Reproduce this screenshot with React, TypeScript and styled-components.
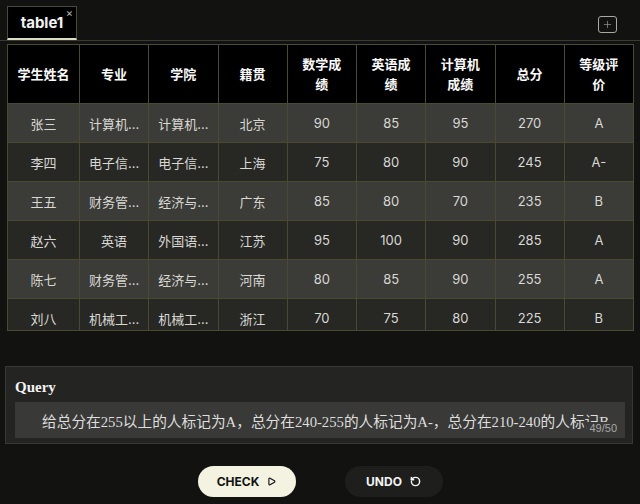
import React from 'react';
import styled, { createGlobalStyle } from 'styled-components';
import { Plus, Play, RotateCcw } from 'lucide-react';

const GlobalStyle = createGlobalStyle`
  body {
    margin: 0;
    background-color: #121211;
    font-family: "Inter", "Noto Sans CJK SC", sans-serif;
  }
`;

const Page = styled.div`
  width: 640px;
  height: 504px;
  display: flex;
  flex-direction: column;
  overflow: hidden;
`;

const TabBar = styled.div`
  height: 41px;
  box-sizing: border-box;
  padding: 6px 23px 0 7px;
  display: flex;
  justify-content: space-between;
  align-items: flex-start;
  border-bottom: 1px solid #3a3a34;
`;

const Tab = styled.div`
  position: relative;
  width: 70px;
  height: 34px;
  box-sizing: border-box;
  display: flex;
  align-items: center;
  justify-content: center;
  background-color: #000;
  border: 1px solid #4a4a3c;
  border-bottom: 2px solid #dedcc0;
  color: #f2f2f2;
  font-size: 15px;
  font-weight: 700;
`;

const CloseMark = styled.span`
  position: absolute;
  top: 0;
  right: 3px;
  font-size: 11px;
  line-height: 12px;
  color: #bbb;
  font-weight: 400;
`;

const AddButton = styled.div`
  margin-top: 10px;
  width: 19px;
  height: 17px;
  box-sizing: border-box;
  border: 1px solid #a8a8a8;
  border-radius: 3px;
  display: flex;
  align-items: center;
  justify-content: center;
  color: #9a9a9a;
`;

const TableWrap = styled.div`
  margin: 3px 6px 0 7px;
  height: 287px;
  box-sizing: border-box;
  overflow: hidden;
  border-bottom: 1px solid #4a4a30;
`;

const Table = styled.table`
  width: 627px;
  table-layout: fixed;
  border-collapse: collapse;
`;

const HeadCell = styled.th`
  height: 58px;
  padding: 0 9px;
  background-color: #000;
  border: 1px solid #4a4a30;
  color: #fafafa;
  font-size: 13px;
  font-weight: 700;
  line-height: 20px;
  text-align: center;
`;

const Row = styled.tr<{ $light: boolean }>`
  height: 39px;
  background-color: ${(p) => (p.$light ? '#3b3b37' : '#272724')};
`;

const Cell = styled.td`
  padding: 0 4px;
  border: 1px solid #4a4a30;
  color: #d8d8d4;
  font-size: 13px;
  text-align: center;
  white-space: nowrap;
  overflow: hidden;
`;

const QueryBox = styled.div`
  margin: 35px 7px 0 5px;
  height: 78px;
  box-sizing: border-box;
  padding: 10px 0 0 9px;
  background-color: #242423;
  border: 1px solid #383834;
`;

const QueryLabel = styled.div`
  font-family: "Liberation Serif", serif;
  font-weight: 700;
  font-size: 15px;
  line-height: 20px;
  color: #f2f2f2;
`;

const InputWrap = styled.div`
  position: relative;
  margin-top: 5px;
  width: 610px;
  height: 36px;
`;

const QueryInput = styled.input`
  width: 100%;
  height: 100%;
  box-sizing: border-box;
  padding: 0 0 0 27px;
  border: none;
  outline: none;
  background-color: #393937;
  color: #dedede;
  font-family: "Liberation Serif", "Noto Sans CJK SC", serif;
  font-size: 14.7px;
`;

const Counter = styled.span`
  position: absolute;
  right: 6px;
  bottom: 3px;
  padding: 0 2px;
  background-color: #393937;
  font-family: "Liberation Sans", sans-serif;
  font-size: 11px;
  line-height: 13px;
  color: #a8a8a8;
`;

const Actions = styled.div`
  margin-top: 22px;
  display: flex;
  justify-content: center;
  gap: 49px;
`;

const ActionButton = styled.button<{ $primary?: boolean }>`
  width: 98px;
  height: 31px;
  border: none;
  border-radius: 16px;
  display: flex;
  align-items: center;
  justify-content: center;
  gap: 8px;
  background-color: ${(p) => (p.$primary ? '#f4f3e2' : '#1e1e1d')};
  color: ${(p) => (p.$primary ? '#111' : '#f5f5f5')};
  font-family: "Inter", sans-serif;
  font-size: 12px;
  font-weight: 700;
  cursor: pointer;
`;

const columns = ['学生姓名', '专业', '学院', '籍贯', '数学成绩', '英语成绩', '计算机成绩', '总分', '等级评价'];

const rows = [
  ['张三', '计算机科学与技术', '计算机学院', '北京', '90', '85', '95', '270', 'A'],
  ['李四', '电子信息工程', '电子信息学院', '上海', '75', '80', '90', '245', 'A-'],
  ['王五', '财务管理', '经济与管理学院', '广东', '85', '80', '70', '235', 'B'],
  ['赵六', '英语', '外国语学院', '江苏', '95', '100', '90', '285', 'A'],
  ['陈七', '财务管理', '经济与管理学院', '河南', '80', '85', '90', '255', 'A'],
  ['刘八', '机械工程', '机械工程学院', '浙江', '70', '75', '80', '225', 'B'],
];

const query = '给总分在255以上的人标记为A，总分在240-255的人标记为A-，总分在210-240的人标记B';

// cells show at most 3 characters, like the fixed-width columns of the grid
const clip = (text: string) => (text.length > 3 ? `${text.slice(0, 3)}...` : text);

export default function App() {
  return (
    <Page>
      <GlobalStyle />
      <TabBar>
        <Tab>
          table1
          <CloseMark>×</CloseMark>
        </Tab>
        <AddButton>
          <Plus size={11} strokeWidth={1.5} />
        </AddButton>
      </TabBar>

      <TableWrap>
        <Table>
          <colgroup>
            <col style={{ width: 72 }} />
            {columns.slice(1).map((c) => (
              <col key={c} />
            ))}
          </colgroup>
          <thead>
            <tr>
              {columns.map((c) => (
                <HeadCell key={c}>{c}</HeadCell>
              ))}
            </tr>
          </thead>
          <tbody>
            {rows.map((r, i) => (
              <Row key={r[0]} $light={i % 2 === 0}>
                {r.map((v, j) => (
                  <Cell key={j} title={v}>
                    {clip(v)}
                  </Cell>
                ))}
              </Row>
            ))}
          </tbody>
        </Table>
      </TableWrap>

      <QueryBox>
        <QueryLabel>Query</QueryLabel>
        <InputWrap>
          <QueryInput defaultValue={query} maxLength={50} />
          <Counter>{query.length}/50</Counter>
        </InputWrap>
      </QueryBox>

      <Actions>
        <ActionButton $primary>
          CHECK
          <Play size={9} strokeWidth={3} />
        </ActionButton>
        <ActionButton>
          UNDO
          <RotateCcw size={11} strokeWidth={3.2} />
        </ActionButton>
      </Actions>
    </Page>
  );
}
